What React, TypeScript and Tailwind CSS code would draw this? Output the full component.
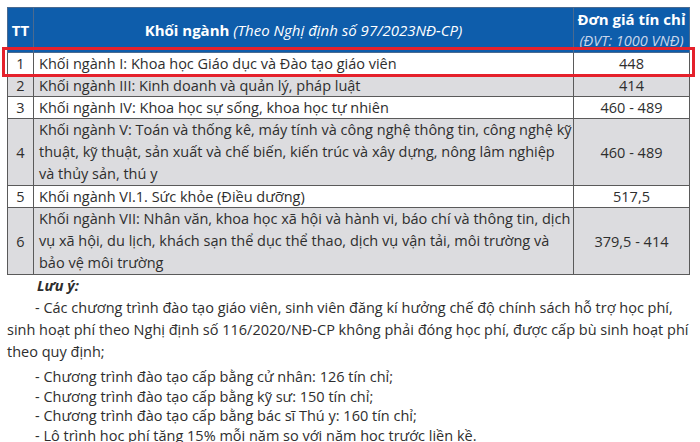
import React from "react";

const rows: { tt: string; lines: string[]; price: string; gray: boolean }[] = [
  { tt: "1", lines: ["Khối ngành I: Khoa học Giáo dục và Đào tạo giáo viên"], price: "448", gray: false },
  { tt: "2", lines: ["Khối ngành III: Kinh doanh và quản lý, pháp luật"], price: "414", gray: true },
  { tt: "3", lines: ["Khối ngành IV: Khoa học sự sống, khoa học tự nhiên"], price: "460 - 489", gray: false },
  {
    tt: "4",
    lines: [
      "Khối ngành V: Toán và thống kê, máy tính và công nghệ thông tin, công nghệ kỹ",
      "thuật, kỹ thuật, sản xuất và chế biến, kiến trúc và xây dựng, nông lâm nghiệp",
      "và thủy sản, thú y",
    ],
    price: "460 - 489",
    gray: true,
  },
  { tt: "5", lines: ["Khối ngành VI.1. Sức khỏe (Điều dưỡng)"], price: "517,5", gray: false },
  {
    tt: "6",
    lines: [
      "Khối ngành VII: Nhân văn, khoa học xã hội và hành vi, báo chí và thông tin, dịch",
      "vụ xã hội, du lịch, khách sạn thể dục thể thao, dịch vụ vận tải, môi trường và",
      "bảo vệ môi trường",
    ],
    price: "379,5 - 414",
    gray: true,
  },
];

export default function App() {
  return (
    <div
      className="w-[700px] h-[442px] bg-white overflow-hidden text-[#2e2e2e] text-[14.5px]"
      style={{ fontFamily: '"Open Sans", "Noto Sans", sans-serif' }}
    >
      <div className="relative pt-[7px] pl-[7px]">
        <table className="w-[682px] border-collapse table-fixed">
          <colgroup>
            <col className="w-[26px]" />
            <col className="w-[540px]" />
            <col className="w-[116px]" />
          </colgroup>
          <thead>
            <tr className="bg-[#0e5dab] text-white h-[44px]">
              <th className="border border-[#4a6a90] font-bold text-[15px] leading-[22px] text-center">TT</th>
              <th className="border border-[#4a6a90] font-bold text-[15px] leading-[22px] text-center">
                Khối ngành <span className="italic font-normal">(Theo Nghị định số 97/2023NĐ-CP)</span>
              </th>
              <th className="border border-[#4a6a90] text-center leading-[22px]">
                <div className="font-bold text-[15px]">Đơn giá tín chỉ</div>
                <div className="italic font-normal text-[#c9d6ea] text-[14.5px]">(ĐVT: 1000 VNĐ)</div>
              </th>
            </tr>
          </thead>
          <tbody>
            {rows.map((r) => (
              <tr key={r.tt} className={r.gray ? "bg-[#dcdcdf]" : "bg-white"}>
                <td className="border border-[#5a5a5a] text-center leading-[21px] align-middle">{r.tt}</td>
                <td
                  className={
                    r.lines.length > 1
                      ? "border border-[#5a5a5a] px-[5px] leading-[22px]"
                      : "border border-[#5a5a5a] px-[5px] leading-[21px]"
                  }
                >
                  {r.lines.map((l, i) => (
                    <div key={i} className="whitespace-nowrap">{l}</div>
                  ))}
                </td>
                <td className="border border-[#5a5a5a] text-center leading-[21px] align-middle">{r.price}</td>
              </tr>
            ))}
          </tbody>
        </table>
        <div className="absolute left-[2px] top-[47px] w-[693px] h-[30px] border-[3px] border-[#e5212b] pointer-events-none" />
      </div>
      <div className="pl-[7px] leading-[22px]">
        <div className="pl-[30px] italic font-bold">Lưu ý:</div>
        <div className="indent-[28px] whitespace-nowrap">- Các chương trình đào tạo giáo viên, sinh viên đăng kí hưởng chế độ chính sách hỗ trợ học phí,</div>
        <div className="whitespace-nowrap">sinh hoạt phí theo Nghị định số 116/2020/NĐ-CP không phải đóng học phí, được cấp bù sinh hoạt phí</div>
        <div className="whitespace-nowrap">theo quy định;</div>
        <div className="pl-[28px] pt-[4px] leading-[19.5px]">
          <div>- Chương trình đào tạo cấp bằng cử nhân: 126 tín chỉ;</div>
          <div>- Chương trình đào tạo cấp bằng kỹ sư: 150 tín chỉ;</div>
          <div>- Chương trình đào tạo cấp bằng bác sĩ Thú y: 160 tín chỉ;</div>
          <div>- Lộ trình học phí tăng 15% mỗi năm so với năm học trước liền kề.</div>
        </div>
      </div>
    </div>
  );
}
